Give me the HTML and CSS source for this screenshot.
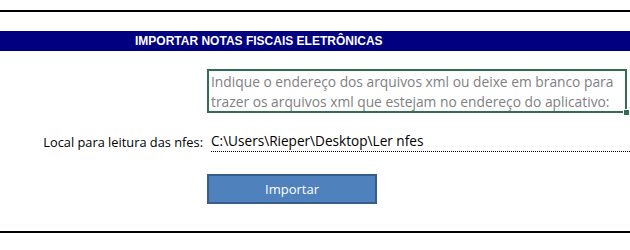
FILE: index.html
```html
<html>
    <head>
        <title>Importar NF-e</title>
        <meta charset="utf-8">
        <link rel="stylesheet" href="styles.css">
    </head>
    <body>
        <div class="rule top"></div>
        <div class="titlebar"><span>IMPORTAR NOTAS FISCAIS ELETRÔNICAS</span></div>
        <div class="row">
            <div class="note">
                Indique o endereço dos arquivos xml ou deixe em branco para<br>
                trazer os arquivos xml que estejam no endereço do aplicativo:
                <div class="handle"></div>
            </div>
        </div>
        <div class="field">
            <div class="label">Local para leitura das nfes:</div>
            <div class="value">C:\Users\Rieper\Desktop\Ler nfes</div>
        </div>
        <div class="row">
            <div class="button">Importar</div>
        </div>
        <div class="rule bottom"></div>
    </body>
</html>
```

FILE: styles.css
```css
body {
    margin: 0;
    background-color: #ffffff;
    font-family: "Open Sans", "Liberation Sans", sans-serif;
    font-size: 13px;
    color: #000000;
}
.rule {
    height: 2px;
    background-color: #000000;
}
.top {
    margin-top: 10px;
}
.bottom {
    margin-top: 27px;
}
.titlebar {
    margin-top: 19px;
    height: 20px;
    line-height: 20px;
    background-color: #000080;
    color: #ffffff;
    font-family: "Liberation Sans", sans-serif;
    font-weight: bold;
    font-size: 12px;
    padding-left: 135px;
}
.row {
    padding-left: 207px;
}
.note {
    position: relative;
    margin-top: 18px;
    width: 412px;
    height: 39px;
    border: 2px solid #2f6f4f;
    padding: 1px 2px 0 2px;
    color: #7f7f7f;
    font-size: 13.8px;
    line-height: 20px;
    white-space: nowrap;
}
.handle {
    position: absolute;
    right: -5px;
    bottom: -5px;
    width: 5px;
    height: 5px;
    background-color: #2f6f4f;
    border: 1px solid #ffffff;
}
.field {
    display: flex;
    margin-top: 19px;
    line-height: 20px;
}
.label {
    width: 211px;
    text-align: right;
    padding-right: 8px;
    box-sizing: border-box;
    font-size: 12.8px;
}
.value {
    flex: 1;
    border-bottom: 1px dotted #000000;
    font-size: 13.6px;
    line-height: 18px;
}
.button {
    margin-top: 22px;
    width: 166px;
    height: 26px;
    line-height: 26px;
    background-color: #4f81bd;
    border: 2px solid #385d8a;
    color: #ffffff;
    text-align: center;
}
```
